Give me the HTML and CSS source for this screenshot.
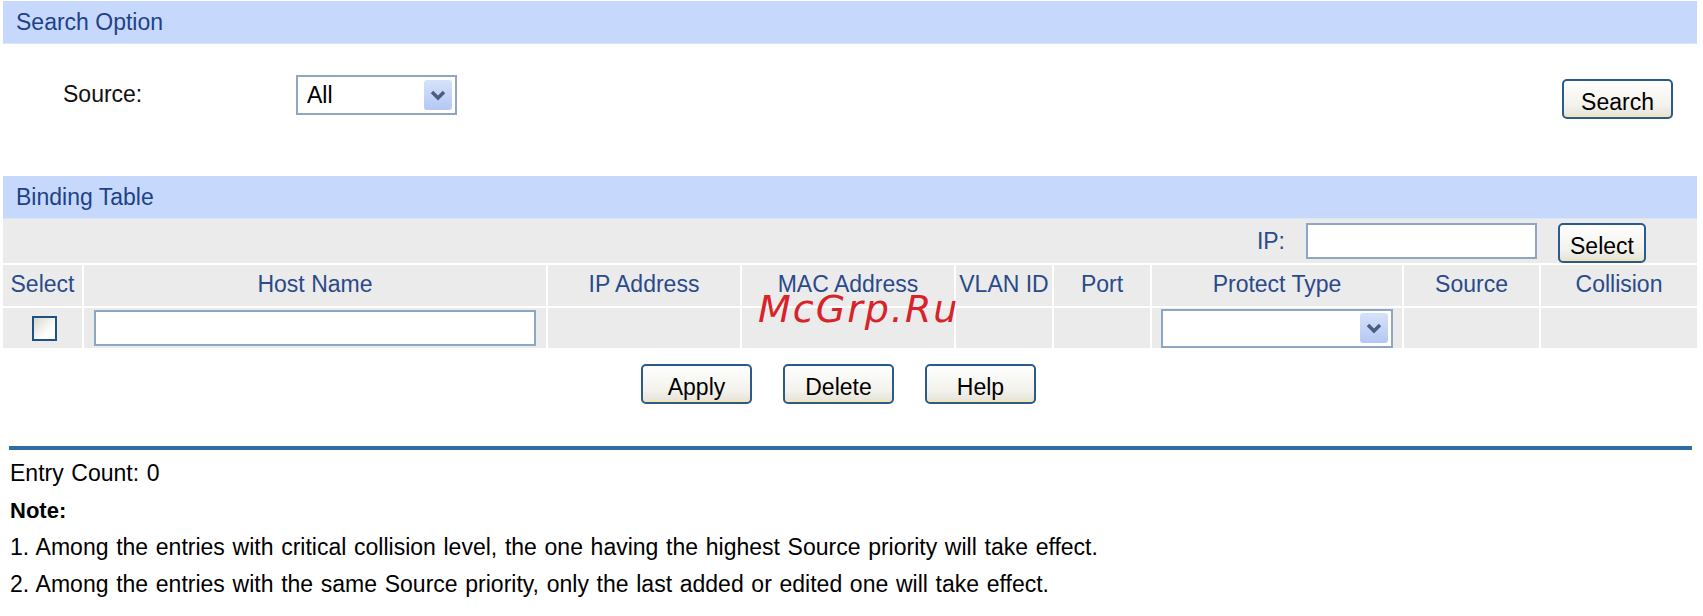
FILE: index.html
```html
<!DOCTYPE html>
<html>

<head>
    <meta charset="UTF-8">
    <title>IP-MAC Binding</title>
    <link rel="stylesheet" href="styles.css">
</head>

<body>
    <div class="page">
        <div class="bar">Search Option</div>
        <div class="search-row">
            <span class="field-label">Source:</span>
            <div class="dropdown dropdown-source">
                <span class="dropdown-text">All</span>
                <span class="dropdown-arrow">
                    <svg width="16" height="11" viewBox="0 0 16 11"><polyline points="2,2 8,8 14,2" fill="none" stroke="#4a5e82" stroke-width="3.5"/></svg>
                </span>
            </div>
            <button class="btn btn-search">Search</button>
        </div>

        <div class="bar">Binding Table</div>
        <div class="binding">
            <div class="ip-row">
                <span class="ip-label">IP:</span>
                <input type="text" class="text-input ip-input">
                <button class="btn btn-select">Select</button>
            </div>

            <div class="th">Select</div>
            <div class="th">Host Name</div>
            <div class="th">IP Address</div>
            <div class="th">MAC Address</div>
            <div class="th">VLAN ID</div>
            <div class="th">Port</div>
            <div class="th">Protect Type</div>
            <div class="th">Source</div>
            <div class="th">Collision</div>

            <div class="td"><span class="checkbox"></span></div>
            <div class="td"><input type="text" class="text-input host-input"></div>
            <div class="td"></div>
            <div class="td"></div>
            <div class="td"></div>
            <div class="td"></div>
            <div class="td">
                <div class="dropdown dropdown-protect">
                    <span class="dropdown-text"></span>
                    <span class="dropdown-arrow">
                        <svg width="16" height="11" viewBox="0 0 16 11"><polyline points="2,2 8,8 14,2" fill="none" stroke="#4a5e82" stroke-width="3.5"/></svg>
                    </span>
                </div>
            </div>
            <div class="td"></div>
            <div class="td"></div>
        </div>

        <div class="actions">
            <button class="btn">Apply</button>
            <button class="btn">Delete</button>
            <button class="btn">Help</button>
        </div>

        <div class="rule"></div>

        <div class="notes">
            <p>Entry Count: 0</p>
            <p class="note-title">Note:</p>
            <p>1. Among the entries with critical collision level, the one having the highest Source priority will take effect.</p>
            <p>2. Among the entries with the same Source priority, only the last added or edited one will take effect.</p>
        </div>

        <div class="watermark">McGrp.Ru</div>
    </div>
</body>

</html>
```

FILE: styles.css
```css
body {
    margin: 0;
    background: #fff;
    font-family: "Liberation Sans", Arial, sans-serif;
    font-size: 23px;
    color: #000;
}

.page {
    position: relative;
    width: 1694px;
    padding: 1px 0 0 3px;
}

/* section title bars */
.bar {
    height: 42px;
    line-height: 42px;
    padding-left: 13px;
    background: #c6d9fc;
    border-bottom: 1px solid #d9e5fb;
    color: #1f4287;
}

.search-row {
    height: 132px;
    display: flex;
    align-items: flex-start;
    padding-top: 31px;
    box-sizing: border-box;
}

.field-label {
    width: 233px;
    margin-left: 60px;
    line-height: 38px;
    color: #111;
}

/* fake select boxes */
.dropdown {
    display: flex;
    align-items: center;
    justify-content: space-between;
    box-sizing: border-box;
    background: #fff;
    border: 2px solid #8ea6c4;
}

.dropdown-source {
    width: 161px;
    height: 40px;
    padding: 0 3px 0 9px;
}

.dropdown-protect {
    width: 232px;
    height: 39px;
    padding: 0 3px 0 9px;
}

.dropdown-arrow {
    display: flex;
    align-items: center;
    justify-content: center;
    width: 28px;
    height: 30px;
    border-radius: 3px;
    background: linear-gradient(#d6e2fa, #b3c8f3);
}

.btn {
    font-family: "Liberation Sans", Arial, sans-serif;
    font-size: 23px;
    color: #000;
    width: 111px;
    height: 40px;
    padding: 6px 0 0;
    border: 2px solid #2b5a8f;
    border-radius: 5px;
    background: linear-gradient(#ffffff, #f2f1ea 70%, #e4e2d8);
    box-shadow: inset 0 -2px 0 #f4e6b4;
}

.btn-search {
    margin: 4px 24px 0 auto;
}

/* binding table */
.binding {
    display: grid;
    grid-template-columns: 79px 462px 192px 212px 96px 96px 250px 135px 1fr;
    grid-template-rows: 44px 41px 40px;
    column-gap: 2px;
    row-gap: 2px;
}

.ip-row {
    grid-column: 1 / -1;
    display: flex;
    align-items: center;
    justify-content: flex-end;
    padding-right: 51px;
    background: #ebebeb;
}

.ip-label {
    color: #2a4a8a;
    margin-right: 21px;
}

.text-input {
    box-sizing: border-box;
    border: 2px solid #8ea6c4;
    background: #fff;
    padding: 0 6px;
    font-family: "Liberation Sans", Arial, sans-serif;
    font-size: 20px;
    outline: none;
}

.ip-input {
    width: 231px;
    height: 36px;
    margin-right: 21px;
}

.btn-select {
    width: 88px;
    margin-top: 4px;
}

.th {
    display: flex;
    align-items: center;
    justify-content: center;
    padding-bottom: 3px;
    background: #ebebeb;
    color: #2a4a8a;
    white-space: nowrap;
}

.td {
    display: flex;
    align-items: center;
    justify-content: center;
    background: #ebebeb;
}

.checkbox {
    display: block;
    width: 25px;
    height: 25px;
    box-sizing: border-box;
    margin-left: 4px;
    border: 2px solid #1d5283;
    background: linear-gradient(135deg, #d8d8d0, #ffffff 70%);
}

.host-input {
    width: 442px;
    height: 36px;
}

.actions {
    display: flex;
    justify-content: center;
    gap: 31px;
    padding: 16px 23px 0 0;
}

.rule {
    height: 4px;
    margin: 42px 5px 0 6px;
    background: #2f6ca4;
}

.notes {
    padding: 5px 0 0 7px;
    font-size: 23px;
    line-height: 37px;
    word-spacing: 1.3px;
}

.notes p {
    margin: 0;
}

.note-title {
    font-weight: bold;
    font-size: 22px;
}

/* watermark stamped over the screenshot */
.watermark {
    position: absolute;
    left: 758px;
    top: 290px;
    font-family: "DejaVu Sans", sans-serif;
    font-style: italic;
    font-size: 38px;
    line-height: 38px;
    letter-spacing: 2px;
    color: #d8232a;
}
```
